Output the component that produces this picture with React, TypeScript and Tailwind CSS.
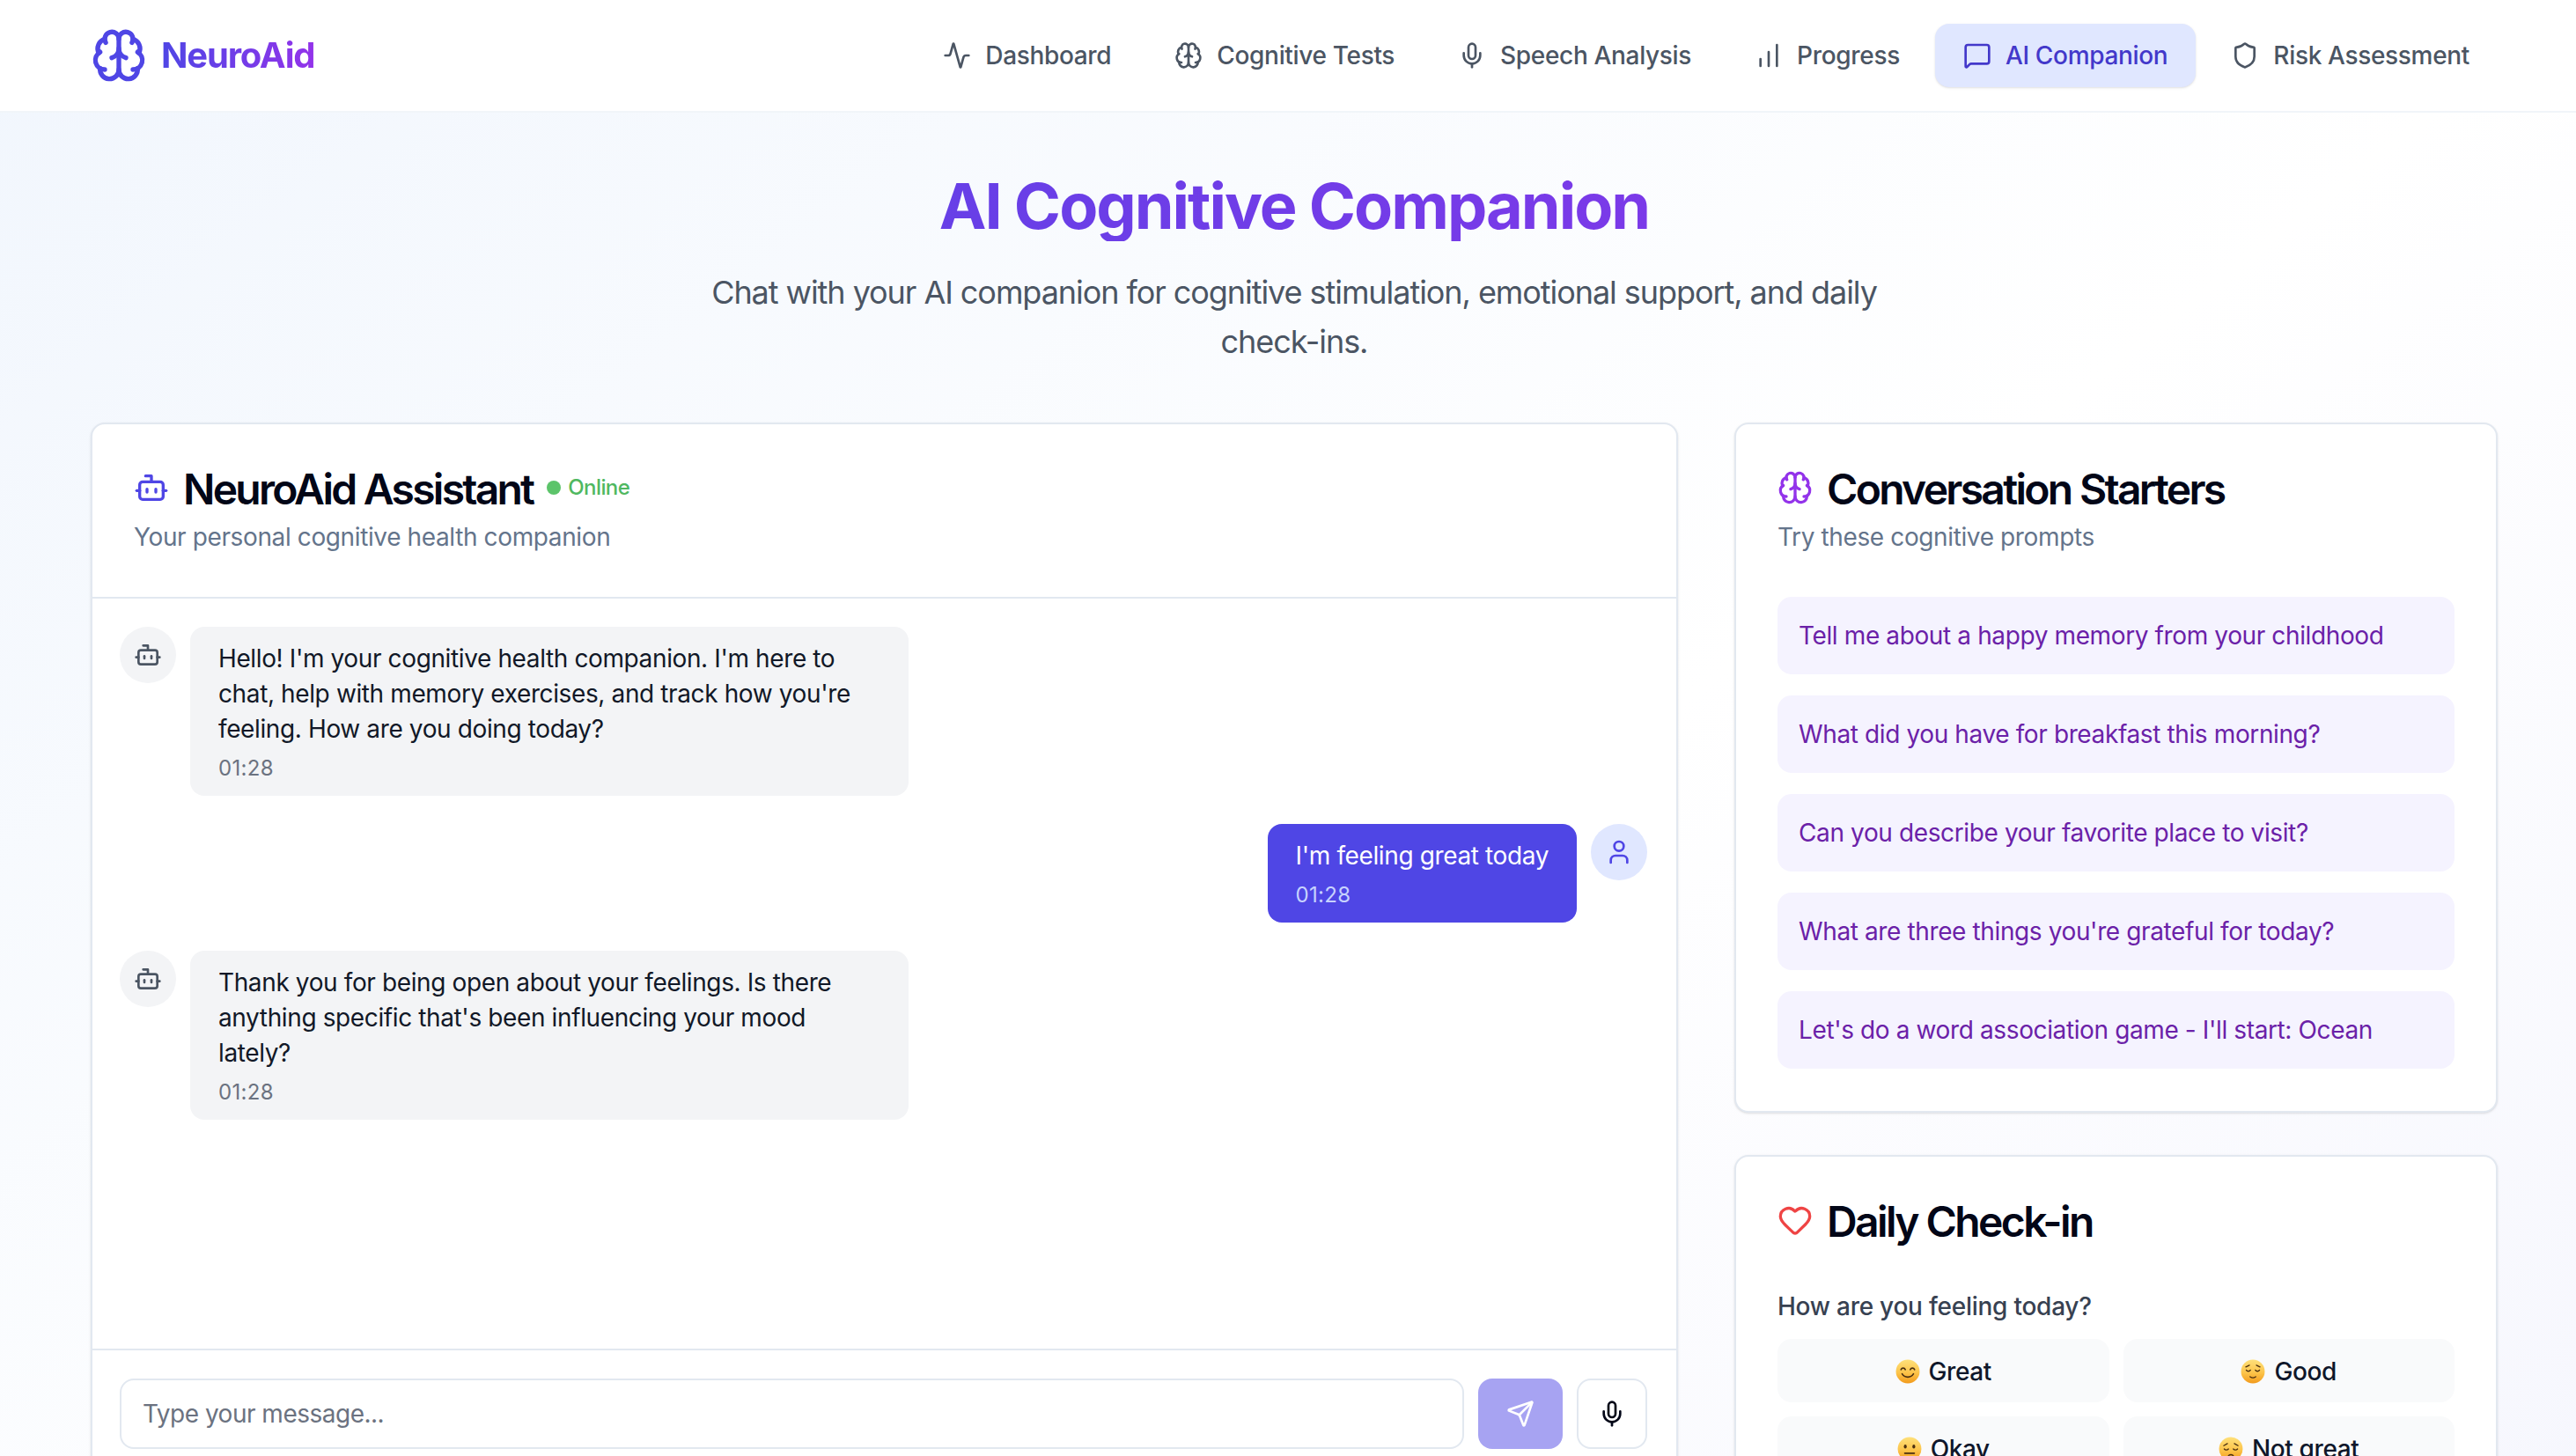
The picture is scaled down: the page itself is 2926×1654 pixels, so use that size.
import React from "react";
import { Activity, BarChart, Bot, Brain, Heart, MessageSquare, Mic, Send, Shield, User } from "lucide-react";

const navItems = [
  { label: "Dashboard", icon: Activity },
  { label: "Cognitive Tests", icon: Brain },
  { label: "Speech Analysis", icon: Mic },
  { label: "Progress", icon: BarChart },
  { label: "AI Companion", icon: MessageSquare, active: true },
  { label: "Risk Assessment", icon: Shield },
];

const starters = [
  "Tell me about a happy memory from your childhood",
  "What did you have for breakfast this morning?",
  "Can you describe your favorite place to visit?",
  "What are three things you're grateful for today?",
  "Let's do a word association game - I'll start: Ocean",
];

// Emoji faces are drawn because no colour emoji font is installed
const Face: React.FC<{ mood: string }> = ({ mood }) => (
  <svg viewBox="0 0 26 26" className="w-7 h-7 shrink-0">
    <defs>
      <linearGradient id={`face-${mood}`} x1="0" y1="0" x2="0" y2="1">
        <stop offset="0" stopColor="#fee07a" />
        <stop offset="0.55" stopColor="#fcc44a" />
        <stop offset="1" stopColor="#f29a1c" />
      </linearGradient>
    </defs>
    <circle cx="13" cy="13" r="12.5" fill={`url(#face-${mood})`} />
    {mood === "great" && (
      <g fill="none" stroke="#4a2f10" strokeWidth="1.5" strokeLinecap="round">
        <path d="M5.8 11c1-2.2 3.6-2.2 4.6 0M15.6 11c1-2.2 3.6-2.2 4.6 0" />
        <path d="M7 15.5c2.6 4.6 9.4 4.6 12 0" />
      </g>
    )}
    {mood === "good" && (
      <g fill="none" stroke="#4a2f10" strokeWidth="1.2" strokeLinecap="round">
        <path d="M5.5 8.2l3.8-1.8M20.5 8.2l-3.8-1.8" />
        <path d="M6 11.5c1 1.7 3.4 1.7 4.4 0M15.6 11.5c1 1.7 3.4 1.7 4.4 0" />
        <path d="M10 18.5c1.8 1.3 4.2 1.3 6 0" />
      </g>
    )}
    {mood === "okay" && (
      <g stroke="#4a2f10" strokeLinecap="round">
        <ellipse cx="8.5" cy="10.5" rx="1.5" ry="2.1" fill="#4a2f10" stroke="none" />
        <ellipse cx="17.5" cy="10.5" rx="1.5" ry="2.1" fill="#4a2f10" stroke="none" />
        <path d="M8 17.5h10" strokeWidth="1.6" fill="none" />
      </g>
    )}
    {mood === "bad" && (
      <g fill="none" stroke="#4a2f10" strokeWidth="1.2" strokeLinecap="round">
        <path d="M5.5 9.5l3.8-2.2M20.5 9.5l-3.8-2.2" />
        <path d="M6 13c1 1.4 3.4 1.4 4.4 0M15.6 13c1 1.4 3.4 1.4 4.4 0" />
        <path d="M10.5 20c1.5-1.2 3.5-1.2 5 0" />
      </g>
    )}
  </svg>
);

const moods = [
  { key: "great", label: "Great" },
  { key: "good", label: "Good" },
  { key: "okay", label: "Okay" },
  { key: "bad", label: "Not great" },
];

const BotMessage: React.FC<{ lines: string[] }> = ({ lines }) => (
  <div className="flex gap-4">
    <div className="w-16 h-16 rounded-full bg-[#f3f4f6] flex items-center justify-center shrink-0">
      <Bot size={32} strokeWidth={2} className="text-[#4b5563]" />
    </div>
    <div className="w-[816px] bg-[#f3f4f6] rounded-2xl px-8 py-4 text-[28px] leading-10 text-[#111827]">
      {lines.map((line) => (
        <div key={line}>{line}</div>
      ))}
      <div className="text-[24px] leading-[30px] mt-[10px] tracking-[0.3px] text-[#6b7280]">01:28</div>
    </div>
  </div>
);

export default function App() {
  return (
    <div className="h-[1654px] overflow-hidden font-['Inter',sans-serif] tracking-[-0.38px]">
      <div className="h-[2300px] bg-linear-to-br/srgb from-[#f1f6fd] via-white to-[#f3f4fd]">
        <header className="h-32 bg-white border-b-2 border-[#f1f5f9] pl-[103px] pr-[89px] flex items-center justify-between">
          <div className="flex items-center gap-4">
            <Brain size={64} className="text-[#4f46e5]" />
            <span className="text-[40px] leading-[56px] font-bold tracking-[-1.17px] bg-linear-to-r/srgb from-[#4f46e5] to-[#9333ea] bg-clip-text text-transparent">
              NeuroAid
            </span>
          </div>
          <nav className="flex items-center gap-2 tracking-[-0.33px]">
            {navItems.map(({ label, icon: Icon, active }) => (
              <div
                key={label}
                className={
                  active
                    ? "flex items-center gap-4 h-[72px] px-8 rounded-[16px] text-[28px] font-medium bg-[#e0e7ff] text-[#4338ca] shadow-sm"
                    : "flex items-center gap-4 h-[72px] px-8 rounded-[16px] text-[28px] font-medium text-[#4b5563]"
                }
              >
                <Icon size={32} />
                {label}
              </div>
            ))}
          </nav>
        </header>

        <main className="pl-[103px] pr-[89px] pt-16">
          <div className="text-center mb-16">
            <h1 className="text-[72px] leading-[80px] pt-[2px] -mb-[2px] font-bold tracking-[-2px] bg-linear-to-r/srgb from-[#4f46e5] to-[#9333ea] bg-clip-text text-transparent">
              AI Cognitive Companion
            </h1>
            <p className="mt-8 text-[36px] leading-14 tracking-[-1.06px] text-[#4b5563] max-w-[1344px] mx-auto">
              Chat with your AI companion for cognitive stimulation, emotional support, and daily check-ins.
            </p>
          </div>

          <div className="grid grid-cols-[1803px_867px] gap-x-16 items-start">
            <section className="bg-white border-2 border-[#e2e8f0] rounded-2xl shadow-sm">
              <div className="px-[47px] pt-12 pb-12 border-b-2 border-[#e2e8f0]">
                <div className="flex items-center gap-4">
                  <Bot size={40} className="text-[#4f46e5]" />
                  <h2 className="text-[48px] leading-12 pt-[2px] -mb-[2px] font-semibold tracking-[-2.75px] text-[#020617]">NeuroAid Assistant</h2>
                  <div className="flex items-center gap-2">
                    <span className="w-4 h-4 rounded-full bg-[#5cc46a]" />
                    <span className="text-[24px] leading-8 font-medium tracking-[-0.6px] text-[#4fb860]">Online</span>
                  </div>
                </div>
                <p className="text-[28px] leading-10 mt-3 text-[#64748b]">Your personal cognitive health companion</p>
              </div>

              <div className="h-[852px] pl-[31px] pr-[33px] py-8 flex flex-col gap-8">
                <BotMessage
                  lines={[
                    "Hello! I'm your cognitive health companion. I'm here to",
                    "chat, help with memory exercises, and track how you're",
                    "feeling. How are you doing today?",
                  ]}
                />
                <div className="flex justify-end gap-4">
                  <div className="bg-[#4f46e5] rounded-2xl px-8 py-4 text-[28px] leading-10 text-white">
                    <div>I'm feeling great today</div>
                    <div className="text-[24px] leading-[30px] mt-[10px] tracking-[0.3px] text-[#c7d2fe]">01:28</div>
                  </div>
                  <div className="w-16 h-16 rounded-full bg-[#e0e7ff] flex items-center justify-center shrink-0">
                    <User size={32} className="text-[#4f46e5]" />
                  </div>
                </div>
                <BotMessage
                  lines={[
                    "Thank you for being open about your feelings. Is there",
                    "anything specific that's been influencing your mood",
                    "lately?",
                  ]}
                />
              </div>

              <div className="border-t-2 border-[#e2e8f0] pl-[31px] pr-[33px] py-8 flex gap-4">
                <div className="flex-1 h-20 bg-white border-2 border-[#e2e8f0] rounded-2xl px-6 flex items-center text-[28px] tracking-[-0.5px] text-[#6b7280]">
                  Type your message...
                </div>
                <div className="w-24 h-20 rounded-2xl bg-[#a7a3f2] flex items-center justify-center">
                  <Send size={32} className="text-white" />
                </div>
                <div className="w-20 h-20 rounded-2xl bg-white border-2 border-[#e2e8f0] flex items-center justify-center">
                  <Mic size={32} className="text-[#020617]" />
                </div>
              </div>
            </section>

            <div className="flex flex-col gap-12">
              <section className="bg-white border-2 border-[#e2e8f0] rounded-2xl shadow-sm px-[47px] py-12">
                <div className="flex items-center gap-4">
                  <Brain size={40} className="text-[#9333ea]" />
                  <h2 className="text-[48px] leading-12 pt-[2px] -mb-[2px] font-semibold tracking-[-2.7px] text-[#020617]">Conversation Starters</h2>
                </div>
                <p className="text-[28px] leading-10 mt-3 text-[#64748b]">Try these cognitive prompts</p>
                <div className="mt-12 flex flex-col gap-6">
                  {starters.map((text) => (
                    <div key={text} className="h-[88px] rounded-2xl bg-[#f5f3ff] px-6 flex items-center text-[28px] text-[#6b21a8]">
                      {text}
                    </div>
                  ))}
                </div>
              </section>

              <section className="bg-white border-2 border-[#e2e8f0] rounded-2xl shadow-sm px-[47px] py-12">
                <div className="flex items-center gap-4">
                  <Heart size={40} className="text-[#ef4444]" />
                  <h2 className="text-[48px] leading-12 pt-[2px] -mb-[2px] font-semibold tracking-[-2.6px] text-[#020617]">Daily Check-in</h2>
                </div>
                <p className="text-[28px] leading-10 mt-[54px] font-medium tracking-[-0.25px] text-[#374151]">How are you feeling today?</p>
                <div className="mt-[17px] grid grid-cols-2 gap-4">
                  {moods.map((mood) => (
                    <div key={mood.key} className="h-[72px] pt-[2px] rounded-2xl bg-[#f9fafb] flex items-center justify-center gap-[10px] text-[28px] font-medium text-[#0f172a]">
                      <Face mood={mood.key} />
                      {mood.label}
                    </div>
                  ))}
                </div>
              </section>
            </div>
          </div>
        </main>
      </div>
    </div>
  );
}
